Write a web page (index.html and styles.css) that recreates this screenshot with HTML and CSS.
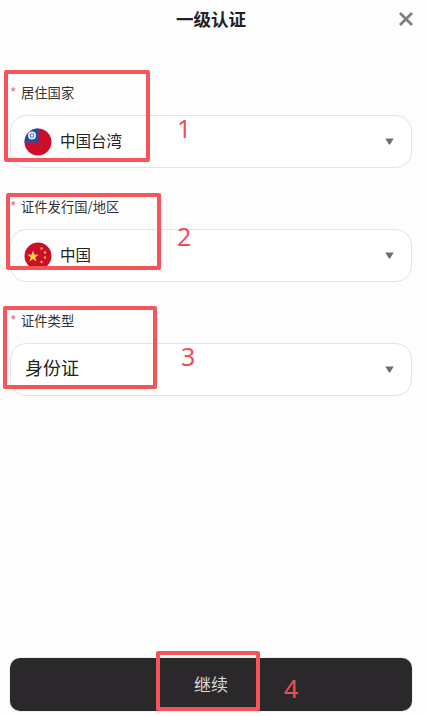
FILE: index.html
```html
<!DOCTYPE html>
<html lang="zh-CN">
<head>
<meta charset="utf-8">
<title>一级认证</title>
<link rel="stylesheet" href="styles.css">
</head>
<body>
<main class="page">
  <header class="header">
    <h1 class="title">一级认证</h1>
    <svg class="close" viewBox="0 0 16 16" aria-label="关闭"><path d="M2 2 14 14M14 2 2 14"/></svg>
  </header>
  <form class="form">
    <div class="field">
      <div class="label"><span class="star">*</span>居住国家</div>
      <div class="select">
        <svg class="flag" viewBox="0 0 28 28">
          <defs><clipPath id="c1"><circle cx="14" cy="14" r="13.5"/></clipPath></defs>
          <g clip-path="url(#c1)">
            <rect width="28" height="28" fill="#c90f2a"/>
            <rect width="14.5" height="14.5" fill="#1b4fa8"/>
            <circle cx="8" cy="7.5" r="4" fill="#e8eefa"/>
            <circle cx="8" cy="7.5" r="2.2" fill="#3f6fc0"/>
            <circle cx="8" cy="7.5" r="1.2" fill="#fff"/>
          </g>
        </svg>
        <span class="value">中国台湾</span>
        <svg class="caret" viewBox="0 0 9 7"><path d="M0.3 0.5H8.7L5.2 6.2Q4.5 7 3.8 6.2Z"/></svg>
      </div>
    </div>
    <div class="field">
      <div class="label"><span class="star">*</span>证件发行国/地区</div>
      <div class="select">
        <svg class="flag" viewBox="0 0 28 28">
          <circle cx="14" cy="14" r="13.5" fill="#c90f2a"/>
          <path fill="#fbd13c" d="M9 8.6l1.4 4 4.3.1-3.4 2.6 1.2 4.1L9 17l-3.5 2.4 1.2-4.1-3.4-2.6 4.3-.1z"/>
          <g fill="#f3b13c"><circle cx="17.5" cy="6.5" r="1.2"/><circle cx="21" cy="10.5" r="1.2"/><circle cx="21" cy="15.5" r="1.2"/><circle cx="17.5" cy="20" r="1.2"/></g>
        </svg>
        <span class="value">中国</span>
        <svg class="caret" viewBox="0 0 9 7"><path d="M0.3 0.5H8.7L5.2 6.2Q4.5 7 3.8 6.2Z"/></svg>
      </div>
    </div>
    <div class="field">
      <div class="label"><span class="star">*</span>证件类型</div>
      <div class="select">
        <span class="value value-large">身份证</span>
        <svg class="caret" viewBox="0 0 9 7"><path d="M0.3 0.5H8.7L5.2 6.2Q4.5 7 3.8 6.2Z"/></svg>
      </div>
    </div>
  </form>
  <button class="submit" type="button">继续</button>
</main>
<div class="mark mark-1"></div><span class="num num-1">1</span>
<div class="mark mark-2"></div><span class="num num-2">2</span>
<div class="mark mark-3"></div><span class="num num-3">3</span>
<div class="mark mark-4"></div><span class="num num-4">4</span>
</body>
</html>
```
FILE: styles.css
```css
* { box-sizing: border-box; }
html, body { margin: 0; height: 100%; }
body {
  position: relative;
  width: 427px;
  height: 716px;
  overflow: hidden;
  background: #fdfdfe;
  font-family: "Noto Sans CJK SC", "Noto Sans", sans-serif;
  color: #222;
}
.page {
  display: flex;
  flex-direction: column;
  height: 716px;
  padding: 0 15px 5px 10px;
}
.header {
  position: relative;
  height: 37px;
  display: flex;
  align-items: center;
  justify-content: center;
  flex: none;
}
.title {
  margin: 0;
  font-size: 17.5px;
  font-weight: 700;
  color: #222;
}
.close {
  position: absolute;
  right: -2px;
  top: 11px;
  width: 16px;
  height: 16px;
  fill: none;
  stroke: #7f7f82;
  stroke-width: 2.8;
}
.form {
  display: flex;
  flex-direction: column;
  gap: 27px;
  padding-top: 44px;
  flex: 1;
}
.field { display: flex; flex-direction: column; }
.label {
  display: flex;
  align-items: center;
  height: 22px;
  margin-bottom: 12px;
  font-size: 13.3px;
  color: #333;
}
.star {
  width: 11px;
  color: #d9788a;
  font-size: 14px;
}
.select {
  display: flex;
  align-items: center;
  height: 53px;
  padding: 0 17px 0 13px;
  border: 1px solid #e3e3e8;
  border-radius: 16px;
  background: #fff;
}
.flag { width: 28px; height: 28px; flex: none; margin-right: 8px; }
.value { font-size: 15.5px; color: #222; flex: 1; padding-bottom: 4px; }
.value-large { font-size: 18px; padding-left: 1px; padding-bottom: 5px; }
.caret { width: 9px; height: 7px; flex: none; fill: #6f6f72; }
.submit {
  flex: none;
  height: 53px;
  border: 0;
  border-radius: 10px;
  background: #2b282c;
  color: #d8d8d8;
  font: inherit;
  font-size: 17px;
  padding-bottom: 3px;
  box-shadow: 0 0 2px rgba(0,0,0,.2);
}
.mark {
  position: absolute;
  border: 4px solid #f4545a;
  border-radius: 2px;
}
.mark-1 { left: 4px; top: 70px; width: 146px; height: 92px; }
.mark-2 { left: 6px; top: 193px; width: 155px; height: 77px; }
.mark-3 { left: 3px; top: 306px; width: 154px; height: 83px; }
.mark-4 { left: 156px; top: 651px; width: 104px; height: 60px; }
.num {
  position: absolute;
  font-family: "Noto Sans", sans-serif;
  font-size: 25px;
  line-height: 28px;
  color: #ee4f55;
}
.num-1 { left: 177px; top: 114px; }
.num-2 { left: 177px; top: 222px; }
.num-3 { left: 181px; top: 342px; }
.num-4 { left: 284px; top: 674px; }
```
